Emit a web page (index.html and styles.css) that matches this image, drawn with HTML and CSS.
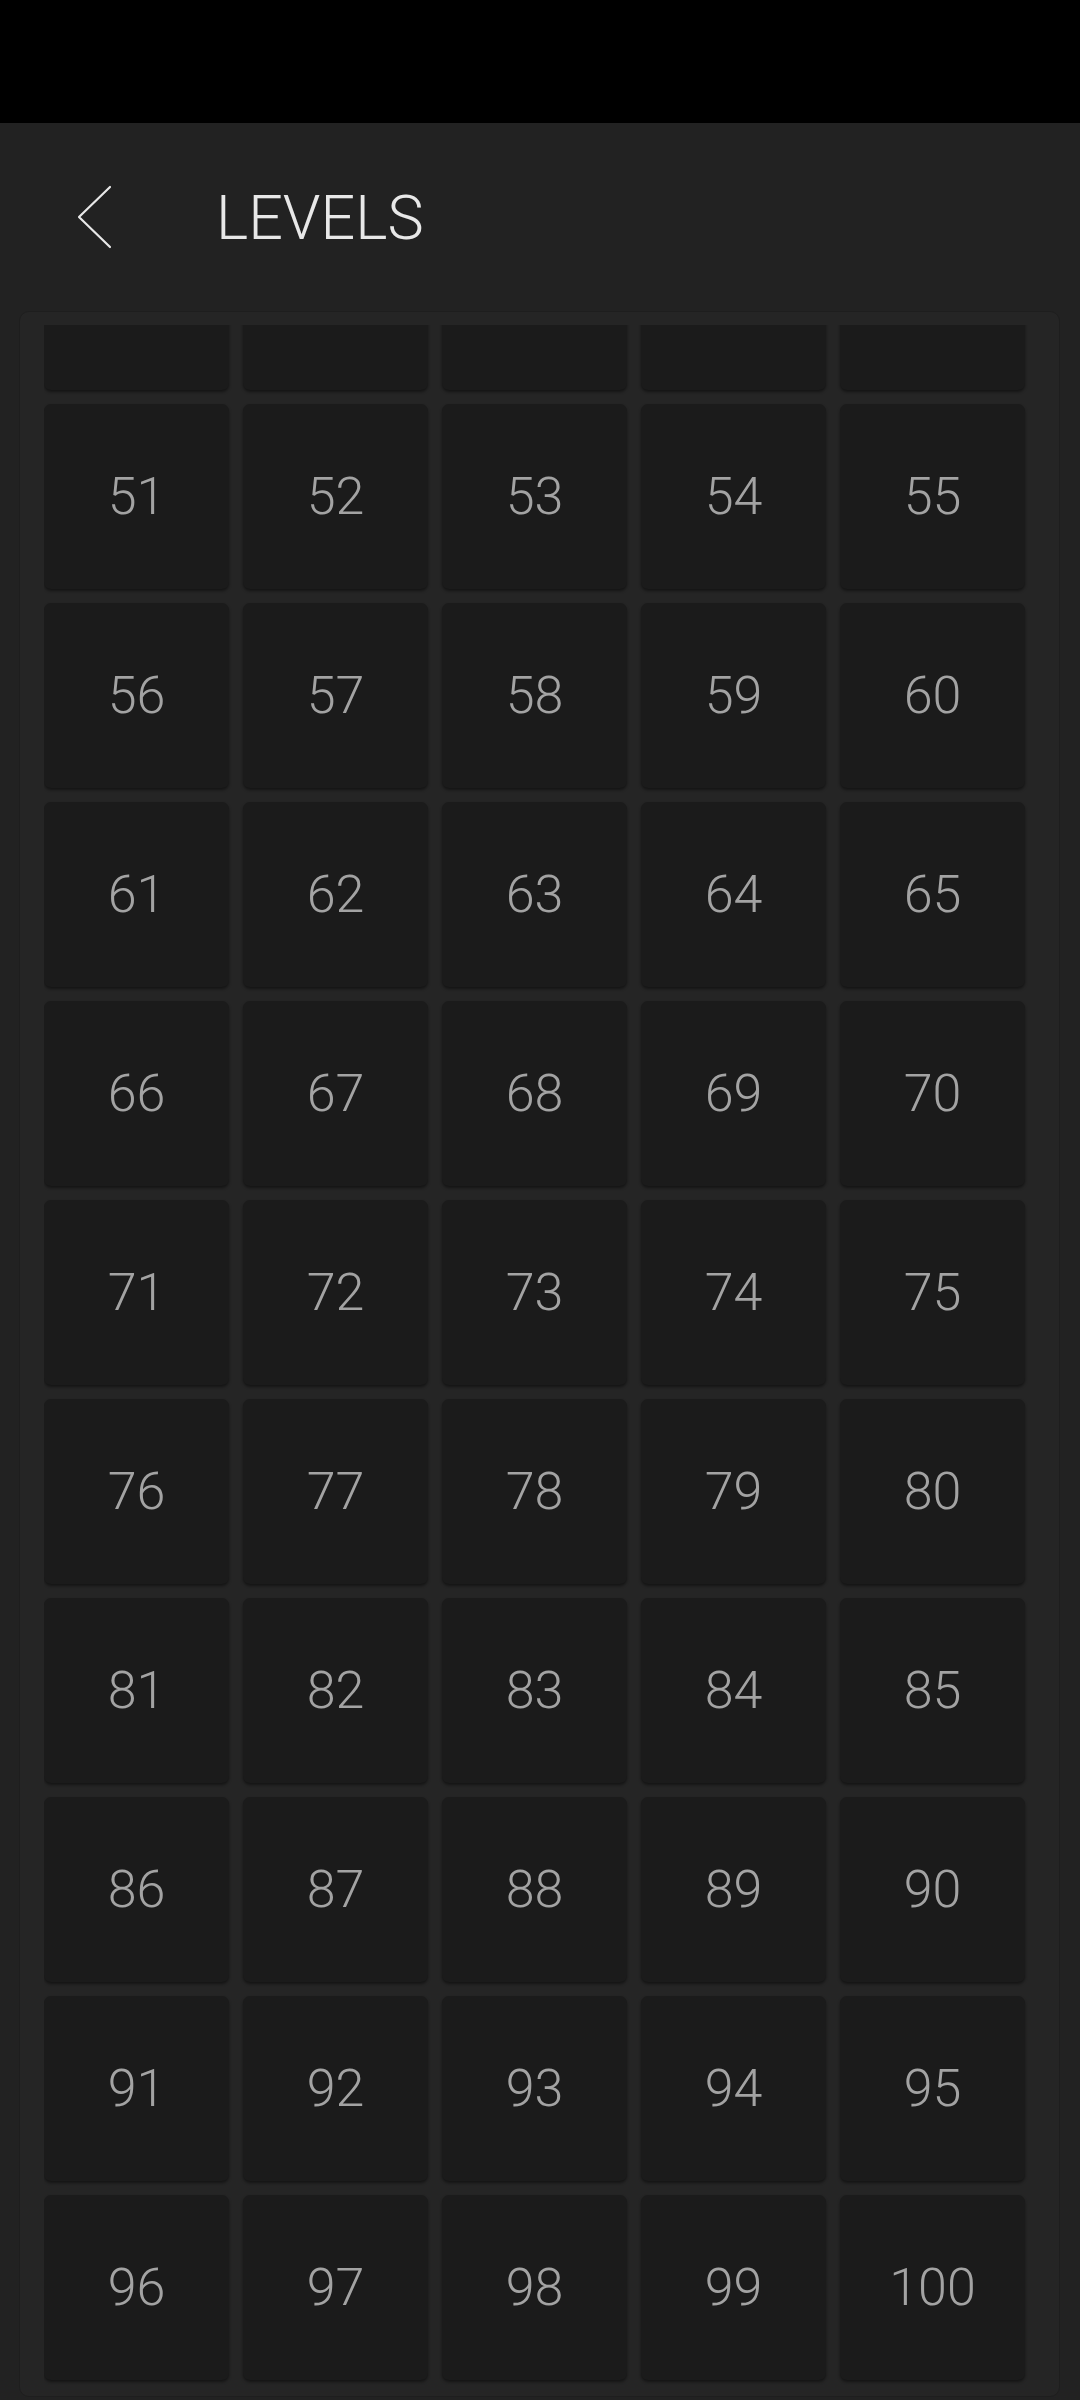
FILE: index.html
```html
<!DOCTYPE html>
<html lang="en">
<head>
    <meta charset="UTF-8">
    <title>LEVELS</title>
    <link rel="stylesheet" href="styles.css">
</head>
<body>

    <!-- status bar -->
    <div id="status-bar"></div>

    <!-- header -->
    <div id="header">
        <button id="back-button" aria-label="back">
            <svg width="40" height="64" viewBox="0 0 40 64">
                <polyline points="33,2 2,32 33,62" fill="none" stroke="#e8e8e8" stroke-width="2.2" stroke-linecap="round" stroke-linejoin="round"/>
            </svg>
        </button>
        <div id="title">LEVELS</div>
    </div>

    <!-- level list -->
    <div id="panel">
        <div id="level-scroll">
            <div id="level-grid"></div>
        </div>
    </div>

    <script src="app.js"></script>
</body>
</html>
```

FILE: styles.css
```css
/* page */
body {
    margin: 0;
    padding: 0;
    width: 1080px;
    height: 2400px;
    overflow: hidden;
    background: #222222;
    font-family: Roboto, "Noto Sans", sans-serif;
}

#status-bar {
    height: 123px;
    background: #000000;
}

#header {
    display: flex;
    align-items: center;
    height: 188px;
}

#back-button {
    display: flex;
    align-items: center;
    justify-content: center;
    width: 40px;
    height: 64px;
    margin-left: 77px;
    margin-right: 99px;
    padding: 0;
    border: none;
    background: none;
}

#title {
    font-size: 61px;
    font-weight: 300;
    color: #e8e8e8;
    margin-top: 2px;
}

#panel {
    margin-left: 19px;
    width: 1041px;
    height: 2086px;
    box-sizing: border-box;
    padding: 13px 0 0 24px;
    background: #252525;
    border: 1px solid #1e1e1e;
    border-radius: 10px;
}

#level-scroll {
    height: 2065px;
    overflow: hidden;
}

#level-grid {
    display: grid;
    grid-template-columns: repeat(5, 185px);
    grid-auto-rows: 185px;
    gap: 14px;
    padding-bottom: 10px;
}

.level {
    display: flex;
    align-items: center;
    justify-content: center;
    background: #1b1b1b;
    border-radius: 7px;
    box-shadow: 0 2px 3px rgba(0, 0, 0, 0.45);
    font-size: 52px;
    font-weight: 300;
    color: #a3a3a3;
}
```

FILE: app.js
```js
// build level tiles (list is already scrolled past the first rows)
var grid = document.getElementById('level-grid');
for (var i = 46; i <= 100; i++) {
    var tile = document.createElement('div');
    tile.className = 'level';
    tile.textContent = i;
    grid.appendChild(tile);
}

// scroll to the end
var scroller = document.getElementById('level-scroll');
scroller.scrollTop = scroller.scrollHeight;
```
